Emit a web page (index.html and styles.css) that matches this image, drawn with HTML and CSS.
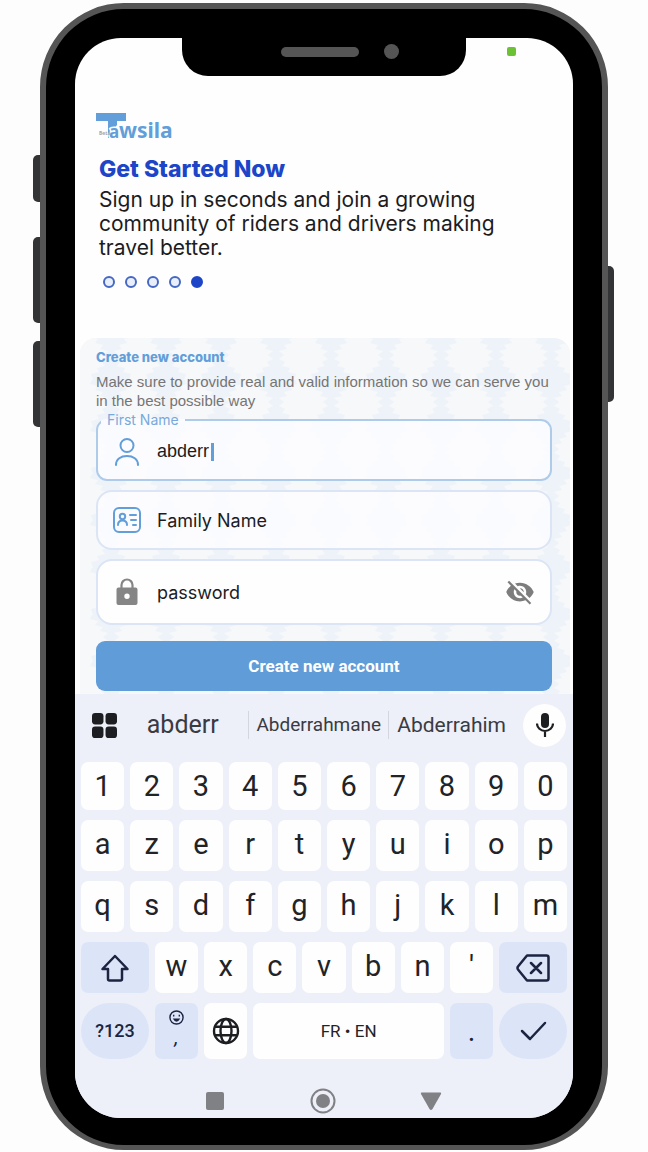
FILE: index.html
```html
<!DOCTYPE html>
<html lang="en">
<head>
<meta charset="utf-8">
<meta name="viewport" content="width=device-width, initial-scale=1">
<title>Tawsila – Create new account</title>
<link rel="stylesheet" href="styles.css">
</head>
<body>
<div class="phone">
  <span class="side side-mute"></span>
  <span class="side side-up"></span>
  <span class="side side-down"></span>
  <span class="side side-power"></span>
  <div class="screen">
    <div class="notch"><span class="speaker"></span><span class="camera"></span></div>
    <span class="status-dot"></span>

    <header class="intro">
      <svg class="logo" viewBox="0 0 80 30" role="img" aria-label="Tawsila">
        <path d="M0 0h30v8h-9v4l-3 4v9h-6V8H0z" fill="#629ed9"/>
        <text class="logo-a" x="13" y="25">a</text>
        <text class="logo-word" x="23" y="25">wsila</text>
        <text class="logo-tag" x="3" y="22">Beta</text>
      </svg>
      <h1>Get Started Now</h1>
      <p class="lead">Sign up in seconds and join a growing community of riders and drivers making travel better.</p>
      <div class="steps"><i></i><i></i><i></i><i></i><i class="on"></i></div>
    </header>

    <form class="panel">
      <svg class="pattern" aria-hidden="true">
        <defs>
          <pattern id="leaf" x="-24" y="-5" width="55" height="47" patternUnits="userSpaceOnUse">
            <path d="M19 0h17l-2 4 8 2-3 4 8 2-3 4 8 2-5 4 5 4-6 3 3 4-8 2 2 4-8 2 2 6H18l2-6-8-2 2-4-8-2 3-4-6-3 5-4-5-4 8-2-3-4 8-2-3-4 8-2z" fill="#f7f8f9"/>
          </pattern>
        </defs>
        <rect width="100%" height="100%" fill="url(#leaf)"/>
      </svg>
      <h2>Create new account</h2>
      <p class="hint">Make sure to provide real and valid information so we can serve you in the best possible way</p>

      <fieldset class="field field-active">
        <legend><label for="first">First Name</label></legend>
        <svg class="icon" viewBox="0 0 28 28" fill="none" stroke="#629ed9" stroke-width="2" stroke-linecap="round"><circle cx="14" cy="7.500" r="6.500"/><path d="M3 27c0-6 5-9 11-9s11 3 11 9"/></svg>
        <input id="first" class="typed" type="text" value="abderr" size="6"><span class="caret"></span>
      </fieldset>

      <div class="field">
        <svg class="icon" viewBox="0 0 28 28" fill="none" stroke="#629ed9" stroke-width="2" stroke-linecap="round"><rect x="1" y="2" width="26" height="24" rx="5"/><circle cx="9.500" cy="10.500" r="2.700"/><path d="M5 19c0-3 2-4.500 4.500-4.500S14 16 14 19M17 9h6M18 14h5M20 19h3"/></svg>
        <input type="text" placeholder="Family Name" aria-label="Family Name">
      </div>

      <div class="field field-solid">
        <svg class="icon" viewBox="0 0 28 28"><path d="M8.500 11V7a5.500 5.500 0 0 1 11 0v4" fill="none" stroke="#858585" stroke-width="2.200"/><path fill-rule="evenodd" fill="#858585" d="M5.500 9.500h17a2 2 0 0 1 2 2V25a2 2 0 0 1-2 2h-17a2 2 0 0 1-2-2V11.500a2 2 0 0 1 2-2zM14 15.500a2.700 2.700 0 1 0 0 5.400 2.700 2.700 0 0 0 0-5.400z"/></svg>
        <input type="password" placeholder="password" aria-label="password">
        <button type="button" class="reveal" aria-label="Show password">
          <svg viewBox="0 0 24 24" fill="#7d7d7d"><path d="M12 7c2.760 0 5 2.240 5 5 0 .65-.13 1.260-.36 1.830l2.920 2.920c1.510-1.260 2.700-2.890 3.430-4.750-1.730-4.390-6-7.500-11-7.500-1.400 0-2.740.25-3.980.7l2.160 2.160C10.740 7.130 11.350 7 12 7zM2 4.270l2.280 2.280.46.46C3.080 8.300 1.780 10.020 1 12c1.730 4.390 6 7.500 11 7.500 1.550 0 3.030-.3 4.380-.84l.42.42L19.730 22 21 20.730 3.270 3 2 4.270zM7.530 9.800l1.550 1.550c-.05.21-.08.43-.08.65 0 1.660 1.340 3 3 3 .22 0 .44-.03.65-.08l1.550 1.550c-.67.33-1.410.53-2.200.53-2.760 0-5-2.240-5-5 0-.79.2-1.530.53-2.200zm4.310-.78l3.150 3.150.02-.16c0-1.660-1.340-3-3-3l-.17.01z"/></svg>
        </button>
      </div>

      <button type="button" class="submit">Create new account</button>
    </form>

    <section class="keyboard" aria-label="Keyboard">
      <div class="suggest">
        <button class="tool" aria-label="Menu"><svg viewBox="0 0 24 24" fill="#1d1e22"><rect width="11" height="11" rx="3"/><rect x="13" width="11" height="11" rx="3"/><rect y="13" width="11" height="11" rx="3"/><rect x="13" y="13" width="11" height="11" rx="3"/></svg></button>
        <button class="word">abderr</button>
        <button class="word narrow">Abderrahmane</button>
        <button class="word snug">Abderrahim</button>
        <button class="mic" aria-label="Voice input"><svg viewBox="0 0 18 24"><rect x="5" width="8" height="15" rx="4" fill="#1d1e22"/><path d="M1 10.500a8 7.500 0 0 0 16 0M9 18v6" fill="none" stroke="#1d1e22" stroke-width="2.200"/></svg></button>
      </div>
      <div class="row row-num"><button>1</button><button>2</button><button>3</button><button>4</button><button>5</button><button>6</button><button>7</button><button>8</button><button>9</button><button>0</button></div>
      <div class="row"><button>a</button><button>z</button><button>e</button><button>r</button><button>t</button><button>y</button><button>u</button><button>i</button><button>o</button><button>p</button></div>
      <div class="row"><button>q</button><button>s</button><button>d</button><button>f</button><button>g</button><button>h</button><button>j</button><button>k</button><button>l</button><button>m</button></div>
      <div class="row">
        <button class="wide tint" aria-label="Shift"><svg class="glyph" viewBox="0 0 30 28"><path d="M15 2 2.500 15H8v10q0 1.500 1.500 1.500h11q1.500 0 1.500-1.500V15h5.500z"/></svg></button>
        <button>w</button><button>x</button><button>c</button><button>v</button><button>b</button><button>n</button><button>'</button>
        <button class="wide tint" aria-label="Backspace"><svg class="glyph glyph-large" viewBox="0 0 34 28"><path d="M11 1.500h19.500q2 0 2 2v21q0 2-2 2H11L2 15.500q-1-1.500 0-3zM15 9l10 10M25 9 15 19"/></svg></button>
      </div>
      <div class="row row-last">
        <button class="wide tint pill small">?123</button>
        <button class="tint emoji" aria-label="Emoji and comma"><svg viewBox="0 0 16 16" fill="none" stroke="#1b2440" stroke-width="1.500"><circle cx="8" cy="8" r="7"/><path d="M4 9q4 7 8 0z" fill="#1b2440" stroke="none"/><path d="M5 5v2M11 5v2"/></svg><em>,</em></button>
        <button aria-label="Language"><svg class="globe" viewBox="0 0 28 28" fill="none" stroke="#1d1e22" stroke-width="2.400"><circle cx="14" cy="14" r="12"/><ellipse cx="14" cy="14" rx="5.500" ry="12"/><path d="M3 9.800h22M3 18.200h22"/></svg></button>
        <button class="space">FR • EN</button>
        <button class="tint dot">.</button>
        <button class="wide tint pill" aria-label="Done"><svg class="glyph" viewBox="0 0 30 28"><path d="m4 14 8 8L27 6"/></svg></button>
      </div>
      <nav class="system">
        <button aria-label="Recents"><svg viewBox="0 0 26 26" fill="#808184"><rect x="4" y="4" width="18" height="18" rx="2"/></svg></button>
        <button aria-label="Home"><svg viewBox="0 0 26 26"><circle cx="13" cy="13" r="11.500" fill="none" stroke="#808184" stroke-width="2"/><circle cx="13" cy="13" r="7" fill="#808184"/></svg></button>
        <button aria-label="Back"><svg viewBox="0 0 26 26" fill="#808184"><path d="M3.500 4.500h19q1 0 .5 1.500l-8.500 15q-1.500 2-3 0L3 6q-.5-1.500.5-1.500z"/></svg></button>
      </nav>
    </section>
  </div>
</div>
</body>
</html>
```
FILE: styles.css
```css
* { box-sizing: border-box; }
body {
  margin: 0;
  padding: 3px 40px 2px;
  background: #fdfdfd;
  font-family: Inter, Roboto, sans-serif;
  color: #1c1c1e;
}
h1, h2, p { margin: 0; }
button, input { border: 0; padding: 0; background: none; font: inherit; color: inherit; }
svg { display: block; }

.phone {
  position: relative;
  padding: 29px 29px 27px;
  border: 6px solid #555;
  border-bottom-width: 5px;
  border-radius: 84px;
  background: #000;
}
.side { position: absolute; width: 7px; left: -13px; background: #333436; border-radius: 5px 0 0 5px; }
.side-mute { top: 146px; height: 47px; }
.side-up { top: 228px; height: 86px; }
.side-down { top: 332px; height: 86px; }
.side-power { top: 257px; height: 136px; left: auto; right: -12px; width: 6px; border-radius: 0 5px 5px 0; }

.screen {
  position: relative;
  overflow: hidden;
  border-radius: 46px;
  background: #fefefe;
}
.notch {
  position: relative;
  width: 57%;
  height: 38px;
  margin: 0 auto;
  border-radius: 0 0 26px 26px;
  background: #000;
}
.speaker { position: absolute; top: 9px; left: 35%; width: 78px; height: 10px; border-radius: 5px; background: #555; }
.camera { position: absolute; top: 6px; left: 71%; width: 15px; height: 15px; border-radius: 50%; background: #555; }
.status-dot { position: absolute; top: 9px; right: 57px; width: 9px; height: 9px; border-radius: 2px; background: #6cc135; }

.intro { padding: 37px 24px 50px; }
.logo { width: 80px; height: 30px; margin-left: -3px; }
.logo text { font-family: "Noto Sans", sans-serif; font-weight: 700; fill: #629ed9; }
.logo .logo-word { font-size: 21px; }
.logo .logo-a { font-size: 17px; stroke: #fefefe; stroke-width: 3px; paint-order: stroke; }
.logo .logo-tag { font-size: 5px; fill: #a5a5a5; }
h1 { margin-top: 10px; font-size: 23px; line-height: 32px; font-weight: 800; color: #1c45c8; }
.lead { margin-top: 3px; font-size: 21px; line-height: 24px; }
.steps { display: flex; gap: 10px; padding: 16px 4px 0; }
.steps i { width: 12px; height: 12px; border: 2px solid #4468c4; border-radius: 50%; background: #e9effa; }
.steps .on { background: #1c45c8; border-color: #1c45c8; }

.panel {
  position: relative;
  margin: 0 3px 0 5px;
  padding: 10px 18px 3px 16px;
  border-radius: 16px 16px 0 0;
  background: #eef3f9;
  overflow: hidden;
}
.pattern { position: absolute; inset: 0; width: 100%; height: 100%; }
.panel > :not(.pattern) { position: relative; }
h2 { font-size: 13px; line-height: 19px; font-weight: 800; color: #629ed9; }
.hint { margin-top: 5px; font: 15px/19px "Liberation Sans", Arial, sans-serif; color: #757575; }

.field {
  display: flex;
  align-items: center;
  height: 60px;
  margin: 0 0 9px;
  padding: 0 15px;
  border: 2px solid #dbe5f5;
  border-radius: 16px;
  background: rgba(252, 253, 255, .8);
  font-size: 18px;
}
.field-active { height: 71px; padding-bottom: 6px; border-color: #aecbea; border-radius: 11px; }
.field-active legend { margin-left: -12px; padding: 0 6px; font: 14px/20px Inter, sans-serif; color: #78a9dc; }
.field-solid { height: 66px; margin-bottom: 16px; background: #fefefe; }
.icon { flex: none; width: 28px; height: 28px; }
.field input { flex: 1; min-width: 0; margin-left: 16px; outline: 0; }
.field input::placeholder { color: #1c1c1e; opacity: 1; }
.field .typed { flex: none; width: 54px; field-sizing: content; font-family: "Liberation Sans", Arial, sans-serif; font-size: 18px; }
.caret { width: 3px; height: 18px; background: #629ed9; }
.reveal svg { width: 30px; height: 30px; }
.submit {
  display: block;
  width: 100%;
  height: 50px;
  border-radius: 9px;
  background: #609cd8;
  color: #fff;
  font: 700 17px Roboto, sans-serif;
}

.keyboard { padding: 0 3px 3px; background: #edeff9; font-family: Roboto, sans-serif; color: #222327; }
.suggest { display: flex; align-items: center; height: 62px; margin: 0 4px 6px 14px; }
.tool svg { width: 25px; height: 25px; }
.word { flex: 1; height: 28px; font-size: 25px; line-height: 28px; color: #3a3b42; }
.narrow { flex: none; padding: 0 7px; border: solid #d3d6de; border-width: 0 1px; font-size: 19px; }
.snug { flex: none; padding: 0 17px 0 8px; font-size: 21px; }
.mic { display: grid; place-items: center; width: 43px; height: 43px; border-radius: 50%; background: #fefefe; }
.mic svg { width: 18px; height: 24px; }

.row { display: grid; grid-template-columns: repeat(20, 1fr); height: 51px; margin-bottom: 10px; }
.row-num { height: 48px; }
.row-last { height: 56px; }
.row button {
  grid-column: span 2;
  display: grid;
  place-items: center;
  margin: 0 3px;
  padding-bottom: 4px;
  border-radius: 7px;
  background: #fefefe;
  font-size: 29px;
  line-height: 30px;
}
.row-num button, .row-last button, .row .wide { padding-bottom: 0; }
.row .wide { grid-column: span 3; }
.row .space { grid-column: span 8; font-size: 17px; }
.row .tint { background: #dce5f8; color: #1b2440; }
.row .pill { border-radius: 28px; }
.row .small { font-size: 18px; font-weight: 500; }
.row .emoji { align-content: center; gap: 2px; padding-bottom: 6px; font-size: 20px; line-height: 20px; }
.emoji svg { width: 15px; height: 15px; }
.glyph { width: 30px; height: 28px; fill: none; stroke: #1b2440; stroke-width: 2.5px; stroke-linejoin: round; stroke-linecap: round; }
.glyph-large { width: 34px; }
.globe { width: 28px; height: 28px; }
.system { display: flex; justify-content: center; gap: 82px; padding: 19px 3px 1px 0; }
.system svg { width: 26px; height: 26px; }
```
